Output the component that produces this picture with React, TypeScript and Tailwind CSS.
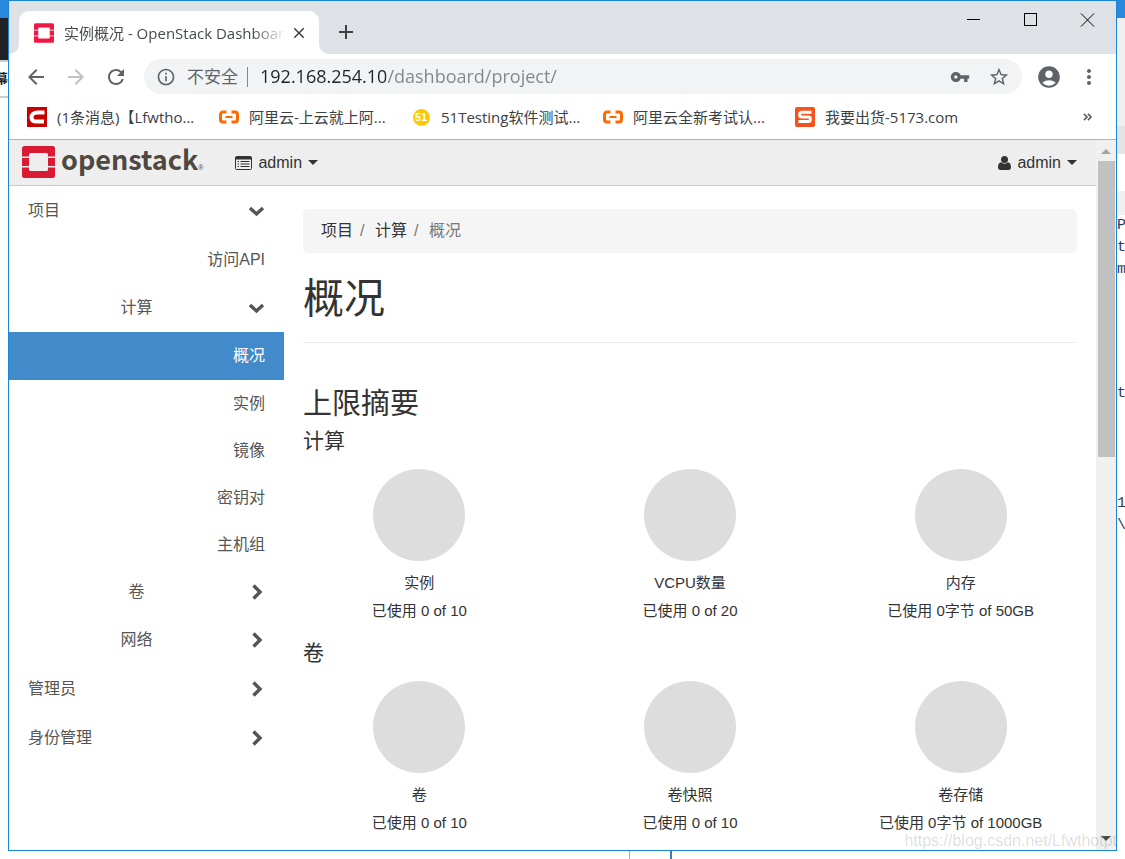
import { useState } from 'react';
import type { ReactNode } from 'react';
import {
  MdAccountCircle,
  MdAdd,
  MdArrowBack,
  MdArrowForward,
  MdClose,
  MdInfoOutline,
  MdMoreVert,
  MdRefresh,
  MdStarBorder,
  MdVpnKey,
} from 'react-icons/md';

interface NavItem {
  label: string;
  level: 1 | 2 | 3;
  open?: boolean;
  active?: boolean;
}

interface Quota {
  label: string;
  used: string;
}

const navItems: NavItem[] = [
  { label: '项目', level: 1, open: true },
  { label: '访问API', level: 3 },
  { label: '计算', level: 2, open: true },
  { label: '概况', level: 3, active: true },
  { label: '实例', level: 3 },
  { label: '镜像', level: 3 },
  { label: '密钥对', level: 3 },
  { label: '主机组', level: 3 },
  { label: '卷', level: 2 },
  { label: '网络', level: 2 },
  { label: '管理员', level: 1 },
  { label: '身份管理', level: 1 },
];

const computeQuotas: Quota[] = [
  { label: '实例', used: '已使用 0 of 10' },
  { label: 'VCPU数量', used: '已使用 0 of 20' },
  { label: '内存', used: '已使用 0字节 of 50GB' },
];

const volumeQuotas: Quota[] = [
  { label: '卷', used: '已使用 0 of 10' },
  { label: '卷快照', used: '已使用 0 of 10' },
  { label: '卷存储', used: '已使用 0字节 of 1000GB' },
];

function OpenStackMark({ className, color }: { className: string; color: string }) {
  return (
    <svg viewBox="0 0 33 32" className={className} fill={color}>
      <path d="M2.500 0h28A2.500 2.500 0 0 1 33 2.500V10.500h-7V8.500A1.500 1.500 0 0 0 24.500 7h-16A1.500 1.500 0 0 0 7 8.500V10.500H0V2.500A2.500 2.500 0 0 1 2.500 0z" />
      <path d="M0 21.500h7v2A1.500 1.500 0 0 0 8.500 25h16a1.500 1.500 0 0 0 1.500-1.500V21.500h7v8a2.500 2.500 0 0 1-2.500 2.500h-28A2.500 2.500 0 0 1 0 29.500z" />
      <path d="M0 12h7v8H0zM26 12h7v8h-7z" />
    </svg>
  );
}

function CsdnIcon() {
  return (
    <svg viewBox="0 0 20 20" className="size-5">
      <rect width="20" height="20" fill="#c80000" />
      <path d="M17.500 5.500H10.500C6.500 5.500 4.500 7.800 4.500 10.200c0 2.700 1.600 4.300 5 4.300h7.500" fill="none" stroke="#fff" strokeWidth="4" />
    </svg>
  );
}

function AliyunIcon() {
  return (
    <svg viewBox="0 0 20 20" className="size-5" fill="none" stroke="#ff6a00" strokeWidth="3">
      <path d="M7.500 5H4A2.500 2.500 0 0 0 1.500 7.500v5A2.500 2.500 0 0 0 4 15h3.500M12.500 5H16a2.500 2.500 0 0 1 2.500 2.500v5A2.500 2.500 0 0 1 16 15h-3.500" />
      <path d="M6.500 10h7" strokeWidth="2" />
    </svg>
  );
}

function TestingIcon() {
  return (
    <span className="flex size-5 items-center justify-center">
      <span className="flex size-[17px] items-center justify-center rounded-full bg-[#ffc800] font-['Liberation_Sans',sans-serif] text-[11px] leading-none font-bold text-white">
        51
      </span>
    </span>
  );
}

function TradeIcon() {
  return (
    <svg viewBox="0 0 20 20" className="size-5">
      <rect width="20" height="20" rx="2" fill="#f4521e" />
      <path d="M16.500 5.200H7c-1.700 0-2.300.7-2.300 2v.8c0 1.300.7 2 2.300 2h6.300c1.400 0 2 .6 2 1.800v.8c0 1.400-.6 2-2 2H3.500" fill="none" stroke="#fff" strokeWidth="3" />
    </svg>
  );
}

const bookmarks: { label: string; icon: ReactNode }[] = [
  { label: '(1条消息)【Lfwtho...', icon: <CsdnIcon /> },
  { label: '阿里云-上云就上阿...', icon: <AliyunIcon /> },
  { label: '51Testing软件测试...', icon: <TestingIcon /> },
  { label: '阿里云全新考试认...', icon: <AliyunIcon /> },
  { label: '我要出货-5173.com', icon: <TradeIcon /> },
];

function Chevron({ open }: { open?: boolean }) {
  return (
    <svg viewBox="0 0 16 16" className="size-4 shrink-0" fill="none" stroke="#555" strokeWidth="3.400">
      {open ? <path d="M1 5l6.500 6L14 5" /> : <path d="M4.500 1.500L11 8l-6.500 6.500" />}
    </svg>
  );
}

function Caret() {
  return (
    <svg viewBox="0 0 10 5" className="h-[5px] w-[10px]" fill="#333">
      <path d="M0 0h10L5 5z" />
    </svg>
  );
}

function ListIcon() {
  return (
    <svg viewBox="0 0 17 14" className="h-[14px] w-[17px]">
      <path d="M1.500 .5h14a1 1 0 0 1 1 1v11a1 1 0 0 1-1 1h-14a1 1 0 0 1-1-1v-11a1 1 0 0 1 1-1z" fill="none" stroke="#333" />
      <path d="M.5 1h16v2.500H.5z" fill="#333" />
      <path d="M2.500 5.500H4M5.500 5.500h9M2.500 8H4M5.500 8h9M2.500 10.500H4M5.500 10.500h9" stroke="#333" strokeWidth="1.200" />
    </svg>
  );
}

function UserIcon() {
  return (
    <svg viewBox="0 0 13 14" className="h-[14px] w-[13px]" fill="#333">
      <circle cx="6.500" cy="3.500" r="3.500" />
      <path d="M3.200 6.300C1 6.600 0 8.500 0 11.300 0 13 1 14 2.500 14h8c1.500 0 2.500-1 2.500-2.700 0-2.800-1-4.700-3.200-5-.8.900-2 1.400-3.300 1.400s-2.500-.5-3.300-1.400z" />
    </svg>
  );
}

function TitleBar() {
  return (
    <div className="flex h-[53px] items-end bg-[#dee1e6] pl-[10px]">
      <div className="relative flex h-[43px] w-[300px] items-center rounded-t-[10px] bg-white pr-[11px] pl-[15px]">
        <svg viewBox="0 0 10 10" className="absolute bottom-0 -left-[10px] size-[10px]" fill="#fff">
          <path d="M10 0v10H0A10 10 0 0 0 10 0z" />
        </svg>
        <svg viewBox="0 0 10 10" className="absolute -right-[10px] bottom-0 size-[10px]" fill="#fff">
          <path d="M0 0v10h10A10 10 0 0 1 0 0z" />
        </svg>
        <OpenStackMark className="size-5 shrink-0" color="#f01742" />
        <span className="ml-[10px] flex-1 overflow-hidden mask-r-from-85% text-[15px] leading-6 whitespace-nowrap text-[#45494d]">
          实例概况 - OpenStack Dashboard
        </span>
        <button aria-label="关闭标签页" className="ml-1 text-[#3c4043]">
          <MdClose className="size-[18px]" />
        </button>
      </div>
      <button aria-label="打开新的标签页" className="mb-[10px] ml-[15px] text-[#3c4043]">
        <MdAdd className="size-6" />
      </button>
      <div className="ml-auto flex self-start pt-[11px]">
        <button aria-label="最小化" className="flex w-[57px] justify-center">
          <svg viewBox="0 0 15 15" className="size-[15px]" stroke="#000" fill="none">
            <path d="M1 7.500h13" />
          </svg>
        </button>
        <button aria-label="最大化" className="flex w-[57px] justify-center">
          <svg viewBox="0 0 15 15" className="size-[15px]" stroke="#000" fill="none">
            <rect x="1.500" y="1.500" width="12" height="12" />
          </svg>
        </button>
        <button aria-label="关闭" className="flex w-[57px] justify-center">
          <svg viewBox="0 0 15 15" className="size-[15px]" stroke="#000" fill="none">
            <path d="M1 1.500l13 13M14 1.500l-13 13" />
          </svg>
        </button>
      </div>
    </div>
  );
}

function Toolbar() {
  const [url, setUrl] = useState('192.168.254.10/dashboard/project/');

  return (
    <div className="flex h-[45px] items-center pr-[15px] pl-[15px] text-[#5f6368]">
      <button aria-label="后退">
        <MdArrowBack className="size-6" />
      </button>
      <button aria-label="前进" className="ml-4 text-[#bdc0c4]">
        <MdArrowForward className="size-6" />
      </button>
      <button aria-label="重新加载" className="ml-4">
        <MdRefresh className="size-6" />
      </button>
      <div className="ml-4 flex h-[35px] min-w-0 flex-1 items-center rounded-full bg-[#f1f3f4] pr-3 pl-3">
        <MdInfoOutline className="size-5 shrink-0" />
        <span className="ml-[11px] text-[17px] whitespace-nowrap">不安全</span>
        <span className="mr-3 ml-[9px] h-5 w-px bg-[#80868b]" />
        <input
          aria-label="地址栏"
          value={url}
          onChange={(e) => setUrl(e.target.value)}
          className="min-w-0 flex-1 bg-[linear-gradient(to_right,#202124_126px,#80868b_126px)] bg-clip-text text-[18px] text-transparent outline-none"
        />
        <button aria-label="密码">
          <MdVpnKey className="size-5" />
        </button>
        <button aria-label="为此网页添加书签" className="ml-[18px]">
          <MdStarBorder className="size-[22px]" />
        </button>
      </div>
      <button aria-label="账号" className="ml-[14px]">
        <MdAccountCircle className="size-[26px]" />
      </button>
      <button aria-label="菜单" className="ml-[15px]">
        <MdMoreVert className="size-6" />
      </button>
    </div>
  );
}

function BookmarkBar() {
  return (
    <div className="flex h-[41px] items-center border-b border-[#b4b4b4] pr-6 pb-1 pl-[18px] text-[#3c4043]">
      <div className="flex min-w-0 flex-1 gap-[22px]">
        {bookmarks.map((b) => (
          <a key={b.label} href="#" className="flex w-[170px] shrink-0 items-center gap-[10px]">
            {b.icon}
            <span className="text-[15px] leading-6 whitespace-nowrap">{b.label}</span>
          </a>
        ))}
      </div>
      <button aria-label="更多书签">
        <svg viewBox="0 0 9 8" className="h-2 w-[9px]" fill="none" stroke="#5f6368" strokeWidth="1.700">
          <path d="M1 .8L4 4 1 7.200M5 .8L8 4 5 7.200" />
        </svg>
      </button>
    </div>
  );
}

function PageHeader() {
  return (
    <header className="flex h-[46px] items-center border-b border-[#ccc] bg-[#eee] pr-[19px] pl-[13px] text-[16px] text-[#333]">
      <a href="#" className="flex items-center pb-[2px]">
        <OpenStackMark className="h-8 w-[33px]" color="#da1a32" />
        <span className="ml-[6px] pb-[5px] font-['Noto_Sans_CJK_SC',sans-serif] text-[27px] leading-8 font-bold text-[#4f4842]">
          openstack
        </span>
        <span className="mt-[14px] font-['Liberation_Sans',sans-serif] text-[7px] text-[#4f4842]">®</span>
      </a>
      <button className="ml-8 flex items-center gap-[6px]">
        <ListIcon />
        admin
        <Caret />
      </button>
      <button className="ml-auto flex items-center gap-[6px]">
        <UserIcon />
        admin
        <Caret />
      </button>
    </header>
  );
}

function Sidebar() {
  const rowHeight = (item: NavItem) => {
    if (item.active || item.level === 2) return 'h-12';
    if (item.level === 1 || item.label === '访问API') return 'h-[49px]';
    return 'h-[47px]';
  };

  return (
    <nav className="w-[275px] shrink-0 text-[16px] text-[#555]">
      {navItems.map((item) =>
        item.level === 3 ? (
          <a
            key={item.label}
            href="#"
            className={`flex items-center justify-end px-[19px] ${rowHeight(item)} ${item.active ? 'bg-[#428bca] text-white' : ''}`}
          >
            {item.label}
          </a>
        ) : (
          <button
            key={item.label}
            aria-expanded={!!item.open}
            className={`flex w-full items-center gap-1 px-[19px] ${rowHeight(item)}`}
          >
            <span className={`flex-1 ${item.level === 2 ? 'text-center' : 'text-left'}`}>{item.label}</span>
            <Chevron open={item.open} />
          </button>
        )
      )}
    </nav>
  );
}

function QuotaRow({ title, quotas }: { title: string; quotas: Quota[] }) {
  return (
    <section className="mb-5 last:mb-0">
      <h3 className="text-[21px] leading-6">{title}</h3>
      <div className="-mx-[19px] mt-4 grid grid-cols-3">
        {quotas.map((q) => (
          <div key={q.label} className="flex flex-col items-center text-[15px] leading-5">
            <div className="size-[92px] rounded-full bg-[#ddd]" />
            <div className="mt-3">{q.label}</div>
            <div className="mt-2">{q.used}</div>
          </div>
        ))}
      </div>
    </section>
  );
}

function Overview() {
  return (
    <main className="min-w-0 flex-1 px-[19px] pt-[23px] text-[#333]">
      <nav className="flex h-11 items-center rounded-[5px] bg-[#f5f5f5] px-[18px] text-[16px]">
        <a href="#">项目</a>
        <span className="w-[22px] pl-[7px] text-[#777]">/</span>
        <a href="#">计算</a>
        <span className="w-[22px] pl-[7px] text-[#777]">/</span>
        <span className="text-[#777]">概况</span>
      </nav>
      <h1 className="mt-[22px] border-b border-[#eee] pb-[19px] text-[41px] leading-12">概况</h1>
      <h2 className="mt-[45px] mb-[9px] text-[29px] leading-8">上限摘要</h2>
      <QuotaRow title="计算" quotas={computeQuotas} />
      <QuotaRow title="卷" quotas={volumeQuotas} />
    </main>
  );
}

function Scrollbar() {
  return (
    <div className="flex w-5 shrink-0 flex-col items-center bg-[#f0f0f0] py-[9px]">
      <svg viewBox="0 0 10 5" className="h-[5px] w-[10px]" fill="#a3a3a3">
        <path d="M0 5h10L5 0z" />
      </svg>
      <div className="mt-[7px] h-[296px] w-[17px] bg-[#c1c1c1]" />
      <svg viewBox="0 0 10 5" className="mt-auto h-[5px] w-[10px]" fill="#505050">
        <path d="M0 0h10L5 5z" />
      </svg>
    </div>
  );
}

// slivers of the windows behind the browser
function LeftBackdrop() {
  return (
    <div className="w-2 shrink-0 overflow-hidden bg-white">
      <div className="h-[18px] bg-[#2788dd]" />
      <div className="h-[42px] bg-[#202225]" />
      <div className="flex h-[38px] items-center justify-end border-y-2 border-[#ccc] text-[13px] font-bold text-[#222]">
        幕
      </div>
    </div>
  );
}

function RightBackdrop() {
  return (
    <div className="w-2 shrink-0 overflow-hidden bg-white font-['Liberation_Mono',monospace] text-[15px] leading-[22px] text-[#2b3a55]">
      <div className="h-[18px] bg-[#2788dd]" />
      <div className="h-[108px] bg-[#f0f0f0]" />
      <div className="h-7 bg-[#e4e4e4]" />
      <div className="mt-[37px] h-6 bg-[#f0f0f0]" />
      <div>P</div>
      <div>t</div>
      <div>m</div>
      <div className="mt-[102px]">t</div>
      <div className="mt-[88px]">1</div>
      <div>\</div>
    </div>
  );
}

export default function App() {
  return (
    <div className="relative flex min-h-screen flex-col overflow-hidden bg-white font-['Liberation_Sans','Noto_Sans_CJK_SC',sans-serif]">
      <div className="flex flex-1">
        <LeftBackdrop />
        <div className="flex min-w-0 flex-1 flex-col border border-[#1a84d8] bg-white">
          <div className="font-['Open_Sans','Noto_Sans_CJK_SC',sans-serif]">
            <TitleBar />
            <Toolbar />
            <BookmarkBar />
          </div>
          <div className="flex flex-1">
            <div className="flex min-w-0 flex-1 flex-col">
              <PageHeader />
              <div className="flex flex-1">
                <Sidebar />
                <Overview />
              </div>
            </div>
            <Scrollbar />
          </div>
        </div>
        <RightBackdrop />
      </div>
      <div className="flex h-2 pl-[629px]">
        <div className="w-px bg-[#aaa]" />
        <div className="ml-10 w-[2px] bg-[#3b7ea8]" />
      </div>
      <div className="absolute right-2 bottom-2 text-[16px] leading-5 text-black/15">https://blog.csdn.net/Lfwthotpt</div>
    </div>
  );
}
